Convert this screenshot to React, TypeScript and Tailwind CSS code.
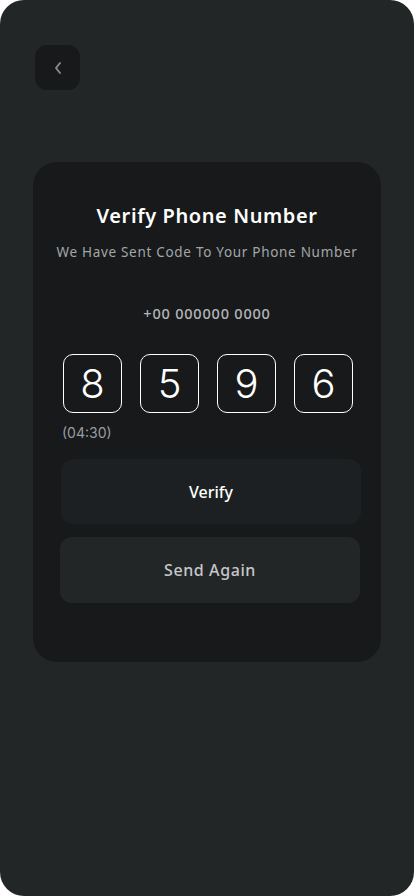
import React from "react";

export default function App() {
  const digits = ["8", "5", "9", "6"];
  return (
    <div className="w-[414px] h-[896px] bg-white" style={{ fontFamily: "'Noto Sans', sans-serif" }}>
      <div className="w-full h-full bg-[#232627] rounded-[24px] flex flex-col overflow-hidden">
        <div className="mt-[45px] ml-[35px] w-[45px] h-[45px] rounded-[12px] bg-[#17191a] flex items-center justify-center">
          <svg width="12" height="16" viewBox="0 0 12 16" fill="none">
            <path d="M8 3L4 8L8 13" stroke="#8a8d8f" strokeWidth="1.9" strokeLinecap="round" strokeLinejoin="round" />
          </svg>
        </div>
        <div className="mt-[72px] ml-[33px] w-[348px] h-[500px] rounded-[24px] bg-[#17191a] flex flex-col items-center">
          <div className="mt-[40px] text-[20px] leading-[28px] font-semibold text-white tracking-[0.6px]">Verify Phone Number</div>
          <div className="mt-[12px] text-[13.5px] leading-[20px] text-[#a3a6a9] tracking-[0.7px]">We Have Sent Code To Your Phone Number</div>
          <div className="mt-[41px] text-[14.5px] leading-[20px] font-medium text-[#b4b6b9] tracking-[0.8px]">+00 000000 0000</div>
          <div className="mt-[31px] flex gap-[18px] ml-[2px]">
            {digits.map((d, i) => (
              <div
                key={i}
                className="w-[59px] h-[59px] rounded-[10px] border-[1.5px] border-white flex items-center justify-center text-[40px] font-light text-white"
                style={{ fontFamily: "Inter, sans-serif" }}
              >
                {d}
              </div>
            ))}
          </div>
          <div className="self-start ml-[29px] mt-[10px] text-[14px] leading-[20px] text-[#9a9da0]" style={{ fontFamily: "Inter, sans-serif" }}>(04:30)</div>
          <div className="mt-[16px] ml-[8px] w-[300px] h-[65px] rounded-[12px] bg-[#1d2022] flex items-center justify-center text-[16px] font-medium text-white">Verify</div>
          <div className="mt-[13px] ml-[6px] w-[300px] h-[66px] rounded-[12px] bg-[#232627] flex items-center justify-center text-[16px] font-medium text-[#c6c8ca] tracking-[0.6px]">Send Again</div>
        </div>
      </div>
    </div>
  );
}
